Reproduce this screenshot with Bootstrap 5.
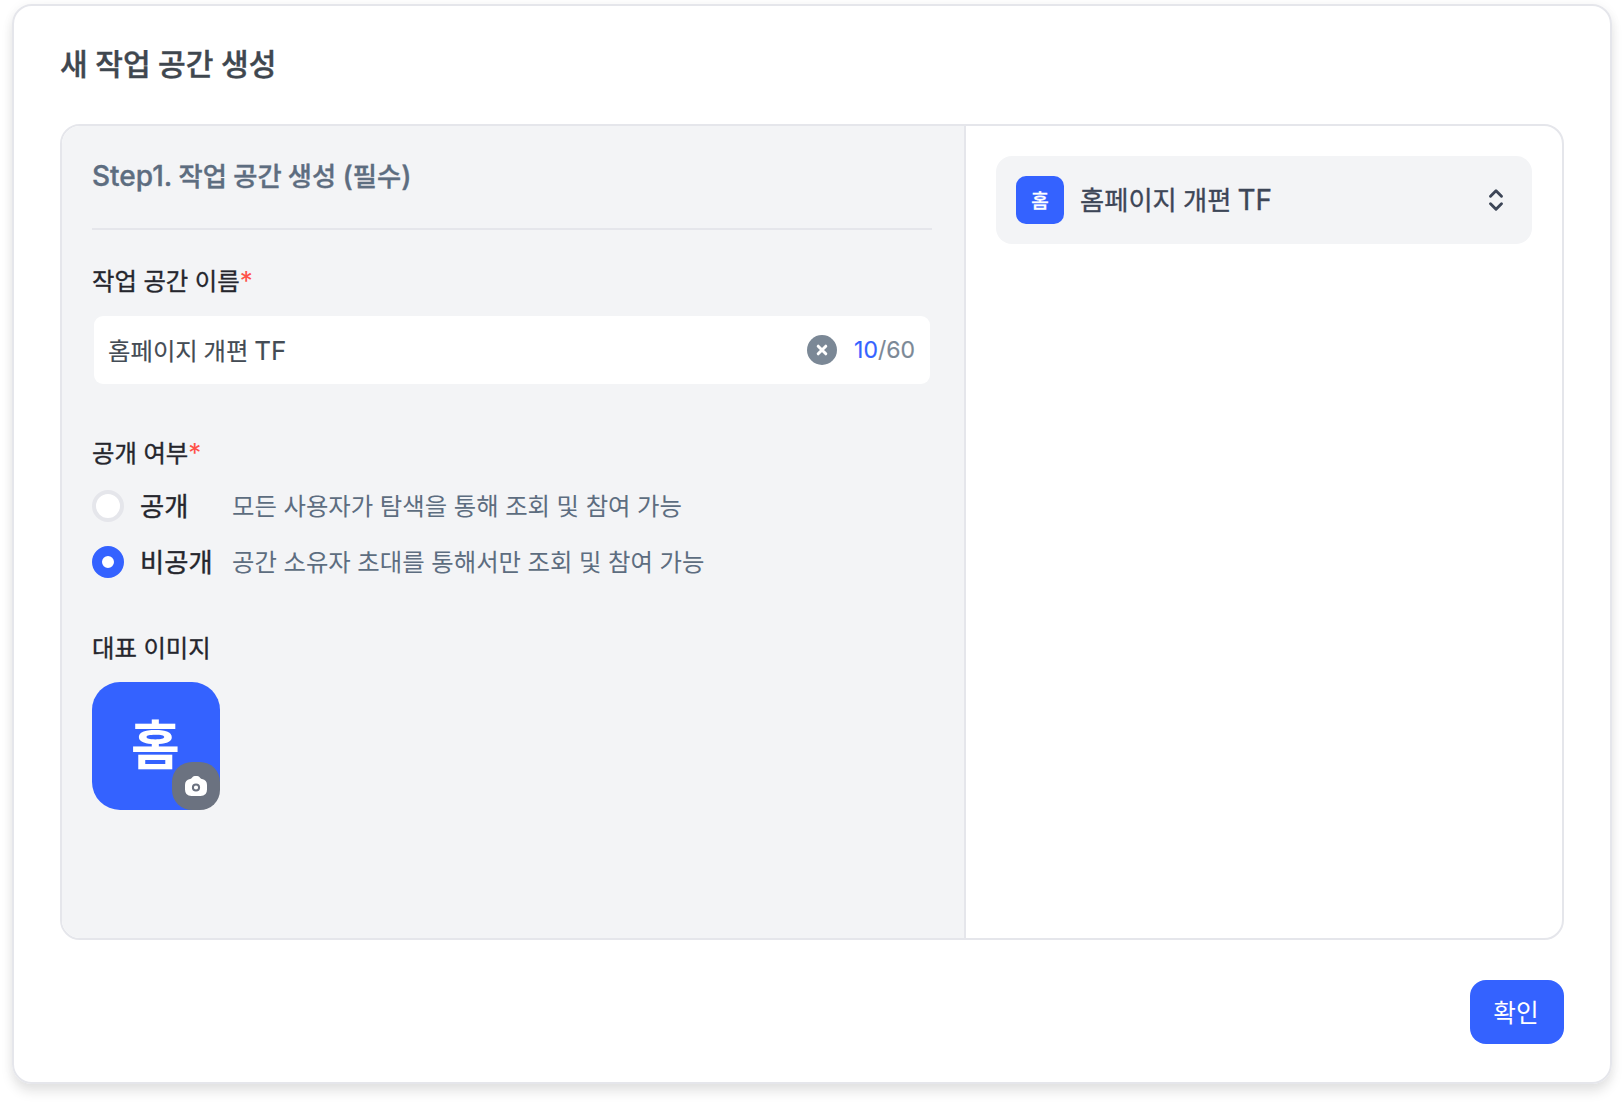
<!DOCTYPE html>
<html lang="ko">
<head>
  <meta charset="UTF-8">
  <meta name="viewport" content="width=device-width, initial-scale=1.0">
  <title>새 작업 공간 생성</title>
  <link href="https://cdn.jsdelivr.net/npm/bootstrap@5.3.3/dist/css/bootstrap.min.css" rel="stylesheet">
  <style>
    body {
      font-family: 'Noto Sans CJK KR', sans-serif;
      font-size: 24.4px;
      line-height: 36px;
      word-spacing: -0.25px;
      color: #25262d;
      background: #fff;
      padding: 4px 12px 20px;
    }
    .latin {
      font-family: Inter, sans-serif;
      font-size: 1.065em;
      line-height: 1;
    }
    .workspace-modal {
      height: 1080px;
      border: 2px solid #e5e6eb;
      border-radius: 20px;
      padding: 32px 46px 38px;
      box-shadow: 0 8px 12px rgba(0,0,0,0.1), 0 0 12px rgba(0,0,0,0.04);
    }
    .workspace-title {
      font-size: 30.1px;
      line-height: 48px;
      word-spacing: -0.9px;
      color: #3f474f;
      -webkit-text-stroke: 0.4px;
    }
    .medium-text {
      font-weight: 500;
    }
    .panel-box {
      height: 816px;
      margin-top: 38px;
      border: 2px solid #e5e6eb;
      border-radius: 20px;
      overflow: hidden;
    }
    .form-side {
      width: 904px;
      padding: 29px 32px 30px 30px;
      background: #f3f4f6;
      border-right: 2px solid #e5e6eb;
    }
    .preview-side {
      padding: 30px;
    }
    .step-title {
      font-size: 26.3px;
      line-height: 40px;
      padding-bottom: 33px;
      margin-bottom: 32px;
      word-spacing: -1.1px;
      border-bottom: 2px solid #e5e6eb;
      color: #5d6d80;
      -webkit-text-stroke: 0.35px;
    }
    .field-label {
      word-spacing: -0.3px;
      -webkit-text-stroke: 0.35px;
    }
    .required {
      color: #ff5147;
      -webkit-text-stroke: 0;
    }
    .name-input {
      height: 68px;
      margin: 18px 2px 50px;
      padding: 0 15px 0 14px;
      border-radius: 9px;
      background: #fff;
      color: #444c55;
      word-spacing: -1px;
      -webkit-text-stroke: 0.15px;
    }
    .clear-icon {
      margin-right: 17px;
    }
    .count-text {
      font-family: Inter, sans-serif;
      font-size: 23px;
      color: #7b8896;
    }
    .blue-text {
      color: #3462ff;
    }
    .radio-list {
      gap: 20px;
      margin: 18px 0 49px;
    }
    .workspace-radio {
      width: 32px;
      height: 32px;
      border: 4px solid #e5e6eb;
      border-radius: 50%;
      background: #fff;
    }
    .workspace-radio.checked {
      border: 10px solid #3462ff;
    }
    .radio-label, .radio-desc {
      line-height: 34px;
      padding-bottom: 2px;
    }
    .radio-label {
      width: 92px;
      padding-left: 16px;
      font-size: 26.3px;
      -webkit-text-stroke: 0.4px;
    }
    .radio-desc {
      color: #5d6d80;
    }
    .space-image {
      width: 128px;
      height: 128px;
      margin-top: 17px;
      padding-right: 1px;
      border-radius: 28px;
      background: #3462ff;
      color: #fff;
      font-size: 53px;
      line-height: 121px;
    }
    .camera-badge {
      width: 48px;
      height: 48px;
      border-radius: 20px;
      background: #6b7280;
    }
    .space-select {
      height: 88px;
      padding: 0 20px;
      border-radius: 16px;
      background: #f3f4f6;
      font-size: 26.3px;
      color: #3d4657;
    }
    .space-name {
      line-height: 38px;
      padding-bottom: 2px;
      word-spacing: -1.2px;
      -webkit-text-stroke: 0.35px;
    }
    .space-icon {
      width: 48px;
      height: 48px;
      border-radius: 10px;
      background: #3462ff;
      color: #fff;
      font-size: 19px;
      line-height: 48px;
      -webkit-text-stroke: 0.3px;
    }
    .btn-confirm {
      width: 94px;
      height: 64px;
      padding: 0 2px 1px 0;
      border-radius: 16px;
      background: #3462ff;
      color: #fff;
      font-size: 24.6px;
    }
    .btn-confirm:hover {
      background: #2451ee;
      color: #fff;
    }
  </style>
</head>
<body>

<main class="workspace-modal d-flex flex-column">
  <h1 class="workspace-title medium-text mb-0">새 작업 공간 생성</h1>

  <div class="panel-box d-flex">
    <section class="form-side flex-shrink-0">
      <h2 class="step-title medium-text"><span class="latin">Step1.</span> 작업 공간 생성 <span class="latin">(</span>필수<span class="latin">)</span></h2>

      <div class="field-label">작업 공간 이름<span class="required latin">*</span></div>
      <div class="name-input d-flex align-items-center">
        <span class="flex-grow-1">홈페이지 개편 <span class="latin">TF</span></span>
        <svg class="clear-icon" width="30" height="30" viewBox="0 0 30 30">
          <circle cx="15" cy="15" r="15" fill="#7b8896"/>
          <path d="M11.2 11.2l7.6 7.6M18.8 11.2l-7.6 7.6" stroke="#fff" stroke-width="3" stroke-linecap="round"/>
        </svg>
        <span class="count-text"><span class="blue-text">10</span>/60</span>
      </div>

      <div class="field-label">공개 여부<span class="required latin">*</span></div>
      <div class="radio-list d-flex flex-column">
        <div class="d-flex align-items-center">
          <span class="workspace-radio"></span>
          <span class="radio-label">공개</span>
          <span class="radio-desc ms-3">모든 사용자가 탐색을 통해 조회 및 참여 가능</span>
        </div>
        <div class="d-flex align-items-center">
          <span class="workspace-radio checked"></span>
          <span class="radio-label">비공개</span>
          <span class="radio-desc ms-3">공간 소유자 초대를 통해서만 조회 및 참여 가능</span>
        </div>
      </div>

      <div class="field-label">대표 이미지</div>
      <div class="space-image position-relative text-center fw-bold">
        홈
        <span class="camera-badge position-absolute bottom-0 end-0 d-flex align-items-center justify-content-center">
          <svg width="22" height="20" viewBox="0 0 22 20">
            <path d="M6.7 1.9Q8 0 9.7 0h2.600q1.700 0 3 1.900.6.900 1.700 1.200Q22 4.300 22 9v4.500Q22 20 15.500 20h-9Q0 20 0 13.500V9Q0 4.300 5 3.100q1.100-.3 1.700-1.200z" fill="#fff"/>
            <circle cx="11" cy="11.5" r="3.100" fill="#fff" stroke="#6b7280" stroke-width="2"/>
          </svg>
        </span>
      </div>
    </section>

    <section class="preview-side flex-grow-1">
      <div class="space-select d-flex align-items-center">
        <span class="space-icon text-center medium-text">홈</span>
        <span class="space-name ms-3 flex-grow-1">홈페이지 개편 <span class="latin">TF</span></span>
        <svg width="32" height="32" viewBox="0 0 32 32" fill="none" stroke="#3d4657" stroke-width="2.9" stroke-linecap="round" stroke-linejoin="round">
          <path d="M10.5 12.3L16 6.8l5.5 5.5M10.5 19.7l5.5 5.5 5.5-5.5"/>
        </svg>
      </div>
    </section>
  </div>

  <button type="button" class="btn btn-confirm border-0 ms-auto mt-auto">확인</button>
</main>

<script src="https://cdn.jsdelivr.net/npm/bootstrap@5.3.3/dist/js/bootstrap.bundle.min.js"></script>
</body>
</html>
